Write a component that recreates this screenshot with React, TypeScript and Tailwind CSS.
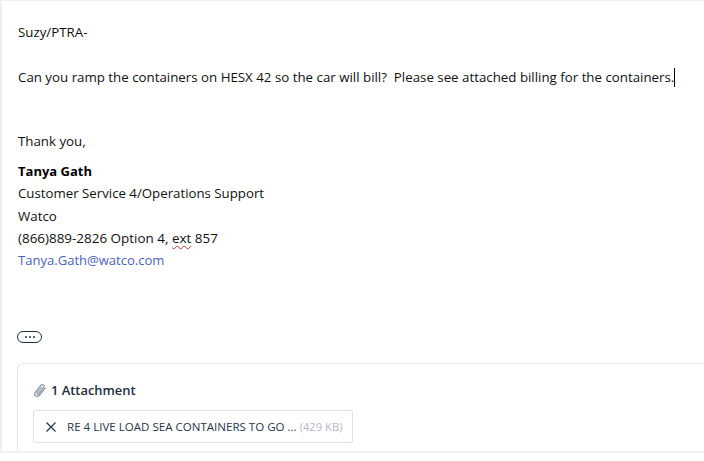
import React from "react";

const font = { fontFamily: '"Open Sans", sans-serif' };

const PaperclipIcon = () => (
  <svg width="14" height="15" viewBox="0 0 14 15" fill="none" stroke="#8a97a8" strokeWidth="1.2" strokeLinecap="round" className="mr-[4px]">
    <path d="M12.2 5.2 6.6 12c-1.2 1.5-3 1.8-4.1.9-1.1-.9-1.1-2.6.1-4.1l5-6.2c.8-1 2-1.2 2.8-.6.8.7.8 1.8 0 2.8l-4.8 6c-.4.5-1 .6-1.4.3-.4-.3-.4-.9 0-1.4l4.3-5.4" />
  </svg>
);

const App = () => {
  return (
    <div className="w-[704px] h-[461px] overflow-hidden bg-white flex flex-col" style={font}>
      <div className="h-px bg-[#edf0f5] shrink-0" />
      <div className="flex-1 min-h-0 border-l-2 border-[#edf0f5] pl-4 text-[13.3px] text-[#111] flex flex-col">
        <p className="mt-[20px] leading-[22px]">Suzy/PTRA-</p>
        <p className="mt-[23px] leading-[22px] whitespace-nowrap">
          Can you ramp the containers on HESX 42 so the car will bill?&nbsp; Please see attached billing for the containers.
          <span className="inline-block w-px h-[19px] bg-black align-[-5px]" />
        </p>
        <p className="mt-[42px] leading-[22px]">Thank you,</p>
        <div className="mt-[8px] leading-[22.3px]">
          <p className="font-bold text-black text-[13px]">Tanya Gath</p>
          <p className="text-[13.25px]">Customer Service 4/Operations Support</p>
          <p>Watco</p>
          <p className="text-[13.45px]">
            (866)889-2826 Option 4,{" "}
            <span className="underline decoration-wavy decoration-[#d13438] decoration-1 underline-offset-2">ext</span> 857
          </p>
          <p className="text-[#4a62c4] text-[13.05px]">Tanya.Gath@watco.com</p>
        </div>
        <button className="mt-[60px] -ml-px w-[25px] h-[12px] rounded-full border border-[#1f3047] flex items-center justify-center gap-[2px] shrink-0">
          <span className="w-[2px] h-[2px] bg-[#1f3047] rounded-full" />
          <span className="w-[2px] h-[2px] bg-[#1f3047] rounded-full" />
          <span className="w-[2px] h-[2px] bg-[#1f3047] rounded-full" />
        </button>
        <div className="mt-[20px] -ml-px flex-1 rounded-tl-[6px] border-t border-l border-[#e3e5e8] pl-[15px] pt-[17px]">
          <div className="flex items-center h-[18px] text-[12.9px] font-semibold text-[#1f2d3d]">
            <PaperclipIcon />
            1 Attachment
          </div>
          <div className="mt-[11px] w-[320px] h-[33px] border border-[#dfe2e6] rounded-[2px] flex items-center pl-[11px] text-[11.55px] whitespace-nowrap">
            <svg width="12" height="12" viewBox="0 0 12 12" stroke="#26364a" strokeWidth="1.2" className="mr-[10px] shrink-0">
              <path d="M1.5 1.5l9 9M10.5 1.5l-9 9" />
            </svg>
            <span className="text-[#26364a]">RE 4 LIVE LOAD SEA CONTAINERS TO GO ...</span>
            <span className="text-[#b3b9c2] ml-[3px] text-[11.2px]">(429 KB)</span>
          </div>
        </div>
      </div>
      <div className="h-[10px] shrink-0 bg-white border-t-2 border-[#edf0f5]" />
    </div>
  );
};

export default App;
